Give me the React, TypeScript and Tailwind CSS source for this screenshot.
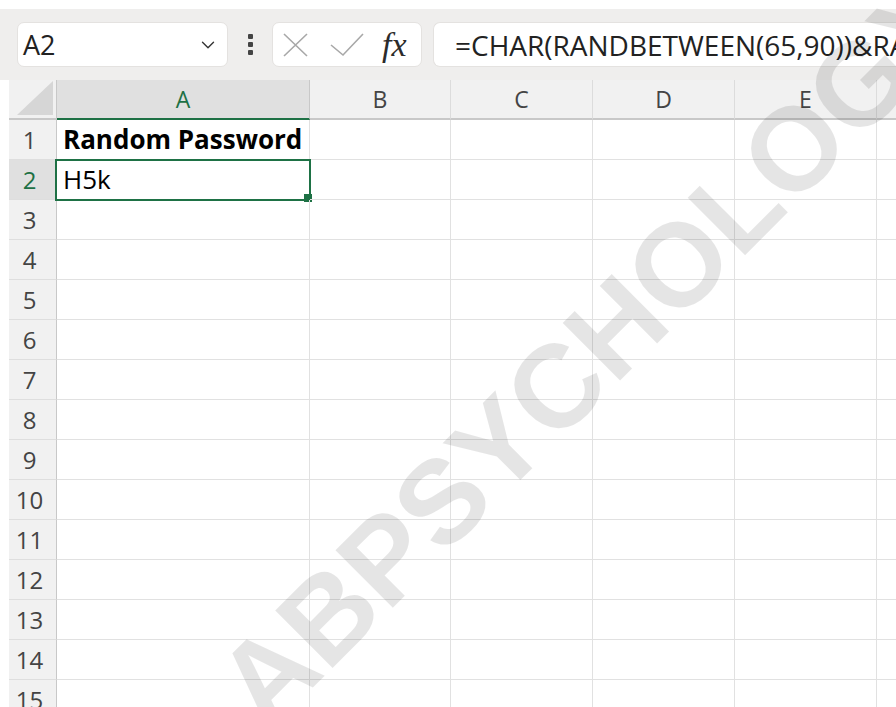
import { ChevronDown } from 'lucide-react';

const columns = [
  { key: 'A', width: 'w-[253px]' },
  { key: 'B', width: 'w-[141px]' },
  { key: 'C', width: 'w-[142px]' },
  { key: 'D', width: 'w-[142px]' },
  { key: 'E', width: 'w-[142px]' },
  { key: 'F', width: 'w-[142px]' },
];

const rows = Array.from({ length: 15 }, (_, i) => i + 1);

const cellText: Record<number, { text: string; bold?: boolean }> = {
  1: { text: 'Random Password', bold: true },
  2: { text: 'H5k' },
};

function FormulaBar() {
  return (
    <div className="flex h-[71px] items-center bg-[#efeeed] pl-[17px]">
      {/* Name box */}
      <div className="flex h-[45px] w-[211px] shrink-0 items-center justify-between rounded-[7px] border border-[#e4e2e0] bg-white pl-[5px] pr-[8px]">
        <span className="text-[27px] leading-none text-[#222]">A2</span>
        <ChevronDown className="h-[22px] w-[22px] text-[#333]" strokeWidth={1.5} />
      </div>

      {/* Splitter dots */}
      <div className="flex w-[44px] shrink-0 flex-col items-center gap-[3px]">
        <span className="h-[5px] w-[5px] rounded-[1px] bg-[#444]" />
        <span className="h-[5px] w-[5px] rounded-[1px] bg-[#444]" />
        <span className="h-[5px] w-[5px] rounded-[1px] bg-[#444]" />
      </div>

      {/* Cancel / enter / insert function */}
      <div className="flex h-[45px] w-[150px] shrink-0 items-center rounded-[7px] border border-[#e4e2e0] bg-white pl-[10px]">
        <svg width="26" height="24" viewBox="0 0 26 24" className="text-[#a8a8a8]">
          <path d="M1 1 L24 23 M24 1 L1 23" stroke="currentColor" strokeWidth="1.6" fill="none" />
        </svg>
        <svg width="34" height="24" viewBox="0 0 34 24" className="ml-[21px] text-[#a8a8a8]">
          <path d="M1 12 L13 22 L33 1" stroke="currentColor" strokeWidth="1.6" fill="none" />
        </svg>
        <span className="ml-[18px] font-['Liberation_Serif',serif] text-[34px] italic leading-none text-[#2b2b2b]">
          fx
        </span>
      </div>

      {/* Formula input */}
      <div className="ml-[11px] flex h-[45px] flex-1 items-center overflow-hidden rounded-l-[7px] border border-r-0 border-[#e4e2e0] bg-white pl-[21px]">
        <span className="whitespace-nowrap text-[28px] leading-none text-[#222]">
          =CHAR(RANDBETWEEN(65,90))&amp;RANDBETWEEN(0,9)&amp;CHAR(RANDBETWEEN(97,122))
        </span>
      </div>
    </div>
  );
}

function HeaderRow() {
  return (
    <div className="flex h-[40px]">
      <div className="w-[9px] shrink-0 bg-white" />
      <div className="relative h-full w-[48px] shrink-0 border-b-2 border-r border-[#c8c8c8] bg-[#f1f1f1]">
        <svg className="absolute bottom-[3px] right-[3px]" width="36" height="34" viewBox="0 0 36 34">
          <path d="M36 0 L36 34 L0 34 Z" fill="#d6d6d6" />
        </svg>
      </div>
      {columns.map((col) => {
        const active = col.key === 'A';
        return (
          <div
            key={col.key}
            className={`${col.width} flex shrink-0 items-center justify-center border-b-2 border-r text-[23px] ${
              active
                ? 'border-b-[#1e7145] border-r-[#c8c8c8] bg-[#e0e0e0] text-[#1e7145]'
                : 'border-b-[#c8c8c8] border-r-[#dcdcdc] bg-[#f1f1f1] text-[#444]'
            }`}
          >
            {col.key}
          </div>
        );
      })}
    </div>
  );
}

function SheetRow({ n }: { n: number }) {
  const active = n === 2;
  const value = cellText[n];
  return (
    <div className="flex h-[40px]">
      <div className="w-[9px] shrink-0 bg-white" />
      <div
        className={`flex w-[48px] shrink-0 items-center justify-center border-b border-r border-b-[#dedede] border-r-[#c8c8c8] pr-[6px] text-[24px] ${
          active ? 'bg-[#e0e0e0] text-[#1e7145]' : 'bg-[#f1f1f1] text-[#444]'
        }`}
      >
        {n}
      </div>
      {columns.map((col) => (
        <div
          key={col.key}
          className={`${col.width} relative flex shrink-0 items-center border-b border-r border-[#e1e1e1] pl-[6px] text-[26px] text-black`}
        >
          {col.key === 'A' && value && (
            <span className={`whitespace-nowrap ${value.bold ? 'font-bold' : ''}`}>{value.text}</span>
          )}
          {col.key === 'A' && active && (
            <>
              <div className="pointer-events-none absolute -left-[2px] -top-[1px] bottom-[-2px] right-[-2px] border-[2px] border-[#1e7145]" />
              <div className="absolute -bottom-[5px] -right-[5px] box-content h-[8px] w-[8px] border-b-2 border-r-2 border-white bg-[#1e7145]" />
            </>
          )}
        </div>
      ))}
    </div>
  );
}

export default function App() {
  return (
    <div className="relative h-[707px] w-[896px] overflow-hidden bg-white font-['Open_Sans','Noto_Sans',sans-serif]">
      <div className="h-[9px] bg-white" />
      <FormulaBar />
      <HeaderRow />
      {rows.map((n) => (
        <SheetRow key={n} n={n} />
      ))}

      {/* Watermark */}
      <span className="pointer-events-none absolute left-[266px] top-[634px] origin-[0_99px] -rotate-45 whitespace-nowrap font-['Liberation_Sans',sans-serif] text-[118px] font-bold leading-none text-black/10">
        ABPSYCHOLOGY
      </span>
    </div>
  );
}
